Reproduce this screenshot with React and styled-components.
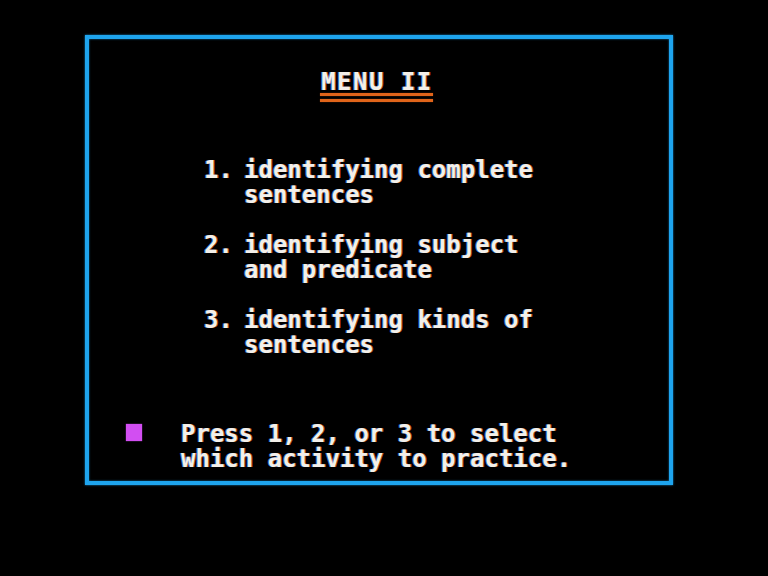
import React from "react";
import styled, { createGlobalStyle } from "styled-components";

const Global = createGlobalStyle`
  html, body { margin: 0; padding: 0; background: #000; }
  body { width: 768px; height: 576px; overflow: hidden; }
`;

const Screen = styled.div`
  width: 768px;
  height: 576px;
  background: #000;
  padding: 35px 0 0 85px;
  box-sizing: border-box;
  font-family: "DejaVu Sans Mono", "Liberation Mono", monospace;
  font-weight: 700;
  font-size: 24px;
  color: #f3efe9;
  text-shadow: -1px 0 0 rgba(70, 150, 255, 0.75), 1px 0 0 rgba(255, 120, 40, 0.7);
`;

const Frame = styled.div`
  width: 588px;
  height: 450px;
  box-sizing: border-box;
  border: 4px solid #1ea4ee;
  box-shadow: 0 0 2px rgba(30, 164, 238, 0.8), inset 0 0 2px rgba(30, 164, 238, 0.8);
  display: flex;
  flex-direction: column;
  padding-top: 30px;
`;

const TitleWrap = styled.div`
  display: flex;
  justify-content: center;
  padding-right: 5px;
`;

const Title = styled.div`
  display: inline-flex;
  flex-direction: column;
  align-items: stretch;
`;

const TitleText = styled.div`
  line-height: 22px;
  padding-top: 2px;
  letter-spacing: 1.5px;
  padding-left: 1px;
  text-align: center;
`;

const Rule = styled.div`
  height: 3px;
  background: #e0641a;
  margin-top: ${(p) => p.$gap}px;
  box-shadow: 0 0 1px rgba(224, 100, 26, 0.8);
`;

const List = styled.div`
  display: flex;
  flex-direction: column;
  gap: 25px;
  margin-top: 56px;
  padding-left: 115px;
`;

const Item = styled.div`
  display: grid;
  grid-template-columns: 40px auto;
  line-height: 25px;
`;

const Num = styled.div``;

const Lines = styled.div`
  display: flex;
  flex-direction: column;
`;

const Line = styled.div`
  white-space: nowrap;
`;

const Prompt = styled.div`
  display: flex;
  align-items: flex-start;
  margin-top: 64px;
  padding-left: 37px;
  line-height: 25px;
`;

const Square = styled.div`
  width: 16px;
  height: 17px;
  margin-top: 2px;
  background: #d24ef2;
  box-shadow: 0 0 1px rgba(210, 78, 242, 0.9);
  flex: none;
`;

const PromptText = styled.div`
  margin-left: 39px;
  display: flex;
  flex-direction: column;
`;

const items = [
  ["1.", "identifying complete", "sentences"],
  ["2.", "identifying subject", "and predicate"],
  ["3.", "identifying kinds of", "sentences"],
];

export default function App() {
  return (
    <>
      <Global />
      <Screen>
        <Frame>
          <TitleWrap>
            <Title>
              <TitleText>MENU II</TitleText>
              <Rule $gap={0} />
              <Rule $gap={3} />
            </Title>
          </TitleWrap>
          <List>
            {items.map(([n, a, b]) => (
              <Item key={n}>
                <Num>{n}</Num>
                <Lines>
                  <Line>{a}</Line>
                  <Line>{b}</Line>
                </Lines>
              </Item>
            ))}
          </List>
          <Prompt>
            <Square />
            <PromptText>
              <Line>Press 1, 2, or 3 to select</Line>
              <Line>which activity to practice.</Line>
            </PromptText>
          </Prompt>
        </Frame>
      </Screen>
    </>
  );
}
